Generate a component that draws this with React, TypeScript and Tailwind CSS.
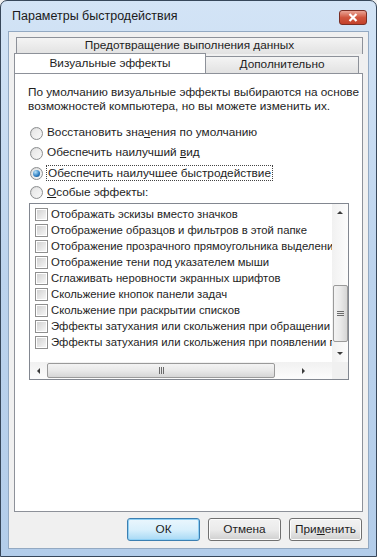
import React from 'react';

const ui = "font-['Liberation_Sans','Noto_Sans',sans-serif] text-[11.8px] text-[#1e1e1e]";

function Radio({ checked }: { checked?: boolean }) {
  return (
    <span className="flex h-[13px] w-[13px] shrink-0 items-center justify-center rounded-full border border-[#8c8e90] bg-gradient-to-br from-[#d6d6d6] to-[#fbfbfb]">
      <span className="flex h-[9px] w-[9px] items-center justify-center rounded-full bg-gradient-to-br from-[#e6e6e6] to-[#f7f7f7]">
        {checked && (
          <span className="h-[7px] w-[7px] rounded-full bg-[radial-gradient(circle_at_35%_30%,#b7e3fb,#2c7cc0_60%,#15467a)]" />
        )}
      </span>
    </span>
  );
}

function Checkbox() {
  return (
    <span className="flex h-[13px] w-[13px] shrink-0 items-center justify-center border border-[#8f8f8f] bg-white">
      <span className="h-[9px] w-[9px] bg-gradient-to-br from-[#d2d2d2] to-[#f6f6f6]" />
    </span>
  );
}

function Arrow({ dir }: { dir: 'up' | 'down' | 'left' | 'right' }) {
  const pts = {
    up: '1,5 4,2 7,5',
    down: '1,2 4,5 7,2',
    left: '5,1 2,4 5,7',
    right: '2,1 5,4 2,7',
  }[dir];
  return (
    <svg width="8" height="8" viewBox="0 0 8 8">
      <polygon points={pts} fill="#3b3b3b" />
    </svg>
  );
}

const items = [
  'Отображать эскизы вместо значков',
  'Отображение образцов и фильтров в этой папке',
  'Отображение прозрачного прямоугольника выделения',
  'Отображение тени под указателем мыши',
  'Сглаживать неровности экранных шрифтов',
  'Скольжение кнопок панели задач',
  'Скольжение при раскрытии списков',
  'Эффекты затухания или скольжения при обращении к меню',
  'Эффекты затухания или скольжения при появлении подсказок',
];

export default function App() {
  return (
    <div className={`${ui} h-[557px] w-[377px] overflow-hidden bg-[#f0f0f0]`}>
      {/* рамка окна */}
      <div className="flex h-[557px] w-[377px] flex-col rounded-t-[7px] border border-[#37475a] bg-gradient-to-b from-[#d3e4f6] via-[#bcd3ed] to-[#b3cdea] px-[7px] pb-[7px]">
        {/* заголовок */}
        <div className="flex h-[30px] shrink-0 items-center justify-between pl-[4px] pr-[2px]">
          <span className="text-[12.5px] text-[#1a1a1a]">Параметры быстродействия</span>
          <span className="mt-[2px] flex h-[15px] w-[28px] items-center justify-center rounded-[3px] border border-[#7a2e24] bg-gradient-to-b from-[#e9a496] via-[#d0563f] to-[#c3402a]">
            <svg width="10" height="9" viewBox="0 0 10 9">
              <path d="M1.5 1 L8.5 8 M8.5 1 L1.5 8" stroke="#fff" strokeWidth="2.2" />
            </svg>
          </span>
        </div>

        {/* клиентская область */}
        <div className="flex h-[518px] flex-col border border-[#93a9c2] bg-[#f0f0f0] pt-[5px]">
          {/* вкладки */}
          <div className="ml-[7px] flex h-[17px] w-[347px] items-center justify-center border border-b-0 border-[#8d9199] bg-gradient-to-b from-[#f4f4f4] to-[#e2e2e2]">
            Предотвращение выполнения данных
          </div>
          <div className="flex h-[19px] items-end">
            <div className="relative z-10 ml-[5px] flex h-[20px] w-[192px] items-center justify-center border border-b-0 border-[#8d9199] bg-white">
              Визуальные эффекты
            </div>
            <div className="flex h-[17px] w-[153px] items-center justify-center border border-b-0 border-l-0 border-[#8d9199] bg-gradient-to-b from-[#f4f4f4] to-[#e2e2e2]">
              Дополнительно
            </div>
          </div>

          {/* панель */}
          <div className="ml-[5px] h-[439px] w-[349px] border border-[#8d9199] bg-white pl-[13px] pt-[11px]">
            <p className="whitespace-nowrap leading-[14px]">
              По умолчанию визуальные эффекты выбираются на основе
              <br />
              возможностей компьютера, но вы можете изменить их.
            </p>

            <div className="mt-[10px] flex flex-col">
              <div className="flex h-[20px] items-center gap-[4px] pl-[2px]">
                <Radio />
                <span>
                  Восстановить зна<u>ч</u>ения по умолчанию
                </span>
              </div>
              <div className="flex h-[20px] items-center gap-[4px] pl-[2px]">
                <Radio />
                <span>
                  Обеспечить наилучший <u>в</u>ид
                </span>
              </div>
              <div className="flex h-[20px] items-center gap-[3px] pl-[2px]">
                <Radio checked />
                <span className="border border-dotted border-[#444] px-[1px] leading-[14px]">
                  Обеспечить наилучшее быстродействие
                </span>
              </div>
              <div className="flex h-[19px] items-center gap-[4px] pl-[2px]">
                <Radio />
                <span>
                  <u>О</u>собые эффекты:
                </span>
              </div>
            </div>

            {/* список */}
            <div className="ml-[1px] mt-[1px] grid h-[177px] w-[320px] grid-cols-[302px_16px] grid-rows-[158px_17px] border border-[#828790]">
              <div className="overflow-hidden pl-[5px] pt-[2px] text-[11.3px]">
                {items.map((t) => (
                  <div key={t} className="flex h-[16px] items-center gap-[3px] whitespace-nowrap">
                    <Checkbox />
                    <span>{t}</span>
                  </div>
                ))}
              </div>
              <div className="flex flex-col items-center bg-gradient-to-r from-[#f1f1f1] to-[#fcfcfc]">
                <div className="flex h-[17px] items-center">
                  <Arrow dir="up" />
                </div>
                <div className="flex flex-1 flex-col items-center pt-[64px]">
                  <div className="flex h-[57px] w-[15px] items-center justify-center rounded-[2px] border border-[#9a9a9a] bg-gradient-to-r from-[#f3f3f3] via-[#e9e9e9] to-[#d6d6d6]">
                    <svg width="7" height="7" viewBox="0 0 7 7">
                      <path d="M0 1.5H7M0 3.5H7M0 5.5H7" stroke="#6b6b6b" strokeWidth="1" />
                    </svg>
                  </div>
                </div>
                <div className="flex h-[17px] items-center">
                  <Arrow dir="down" />
                </div>
              </div>
              <div className="flex items-center bg-gradient-to-b from-[#f1f1f1] to-[#fcfcfc]">
                <div className="flex w-[17px] justify-center">
                  <Arrow dir="left" />
                </div>
                <div className="flex h-[15px] w-[228px] items-center justify-center rounded-[2px] border border-[#9a9a9a] bg-gradient-to-b from-[#f3f3f3] via-[#e9e9e9] to-[#d6d6d6]">
                  <svg width="7" height="7" viewBox="0 0 7 7">
                    <path d="M1.5 0V7M3.5 0V7M5.5 0V7" stroke="#6b6b6b" strokeWidth="1" />
                  </svg>
                </div>
                <div className="flex flex-1 justify-center">
                  <Arrow dir="right" />
                </div>
              </div>
              <div className="bg-[#f0f0f0]" />
            </div>
          </div>

          {/* кнопки */}
          <div className="mt-[6px] flex justify-end gap-[8px] pr-[6px]">
            <button className="flex h-[23px] w-[73px] items-center justify-center rounded-[3px] border border-[#3c7fb1] bg-gradient-to-b from-[#eaf6fd] via-[#d9f0fc] to-[#a7d9f5] shadow-[inset_0_0_0_1px_#8fd0f5]">
              ОК
            </button>
            <button className="flex h-[23px] w-[73px] items-center justify-center rounded-[3px] border border-[#707070] bg-gradient-to-b from-[#f2f2f2] via-[#ebebeb] to-[#cfcfcf] shadow-[inset_0_0_0_1px_#fcfcfc]">
              Отмена
            </button>
            <button className="flex h-[23px] w-[73px] items-center justify-center rounded-[3px] border border-[#707070] bg-gradient-to-b from-[#f2f2f2] via-[#ebebeb] to-[#cfcfcf] shadow-[inset_0_0_0_1px_#fcfcfc]">
              При<u>м</u>енить
            </button>
          </div>
        </div>
      </div>
    </div>
  );
}
